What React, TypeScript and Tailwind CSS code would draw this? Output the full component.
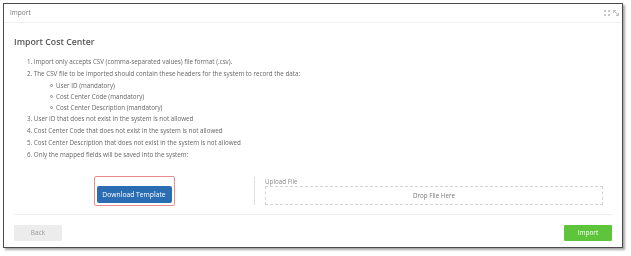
export default function App() {
  const rules = [
    "User ID that does not exist in the system is not allowed",
    "Cost Center Code that does not exist in the system is not allowed",
    "Cost Center Description that does not exist in the system is not allowed",
    "Only the mapped fields will be saved into the system:",
  ];

  return (
    <div
      className="w-[631px] h-[256px] bg-white pt-[3px] pl-[3px] [will-change:transform]"
      style={{ fontFamily: '"Open Sans", sans-serif' }}
    >
      {/* Modal frame */}
      <div className="w-[620px] h-[245px] border border-[#4a4a4a] bg-white shadow-[2px_2px_2px_rgba(0,0,0,0.35)] flex flex-col">
        {/* Title bar */}
        <div className="h-[19px] shrink-0 flex items-center justify-between pl-[6px] pr-[3px] border-b border-[#f0f0f0]">
          <span className="text-[6.5px] text-[#777]">Import</span>
          <div className="flex items-center gap-[3px]">
            <svg width="6" height="6" viewBox="0 0 6 6" fill="#c8c8c8">
              <rect x="0" y="0" width="2" height="2" />
              <rect x="4" y="0" width="2" height="2" />
              <rect x="0" y="4" width="2" height="2" />
              <rect x="4" y="4" width="2" height="2" />
            </svg>
            <svg width="6" height="6" viewBox="0 0 6 6" fill="none" stroke="#c0c0c0" strokeWidth="1">
              <path d="M0.5 0.5 L5.5 5.5 M0.5 0.5 H3 M0.5 0.5 V3 M5.5 5.5 H3 M5.5 5.5 V3" />
            </svg>
          </div>
        </div>

        {/* Body */}
        <div className="flex-1 px-[10px] flex flex-col text-[#666]">
          <h1 className="mt-[13px] text-[8.75px] leading-[12px] font-semibold text-[#555]">Import Cost Center</h1>

          <ol className="mt-[8px] pl-[13px] text-[6.25px]">
            <li className="leading-[12px]">1. Import only accepts CSV (comma-separated values) file format (.csv).</li>
            <li className="leading-[12px]">2. The CSV file to be imported should contain these headers for the system to record the data:</li>
            <ul className="pl-[23px]">
              {["User ID (mandatory)", "Cost Center Code (mandatory)", "Cost Center Description (mandatory)"].map((t) => (
                <li key={t} className="leading-[11px] flex items-center gap-[3px]">
                  <span className="w-[3px] h-[3px] rounded-full border-[0.75px] border-[#888]" />
                  {t}
                </li>
              ))}
            </ul>
            {rules.map((r, i) => (
              <li key={r} className="leading-[12px]">
                {i + 3}. {r}
              </li>
            ))}
          </ol>

          {/* Template / upload row */}
          <div className="mt-[16px] h-[28px] flex">
            <div className="w-[241px] flex items-center justify-center border-r border-[#e0e0e0]">
              <div className="p-[2px] border-[1.5px] border-[#e88d8d] rounded-[2px]">
                <button className="w-[75px] h-[17px] bg-[#2a6db3] rounded-[2px] text-white text-[6.75px]">
                  Download Template
                </button>
              </div>
            </div>
            <div className="flex-1 pl-[10px] pr-[9px] flex flex-col">
              <span className="text-[6.25px] leading-[9px] text-[#888]">Upload File</span>
              <div className="flex-1 border border-dashed border-[#d4d4d4] flex items-center justify-center text-[6.25px] text-[#777]">
                Drop File Here
              </div>
            </div>
          </div>

          {/* Footer */}
          <div className="mt-[9px] border-t border-[#eeeeee] pt-[10px] flex justify-between">
            <button className="w-[48px] h-[16px] bg-[#ececec] rounded-[1px] text-[6.5px] text-[#999]">Back</button>
            <button className="w-[48px] h-[16px] bg-[#5dc43b] rounded-[1px] text-[6.5px] text-white">Import</button>
          </div>
        </div>
      </div>
    </div>
  );
}
